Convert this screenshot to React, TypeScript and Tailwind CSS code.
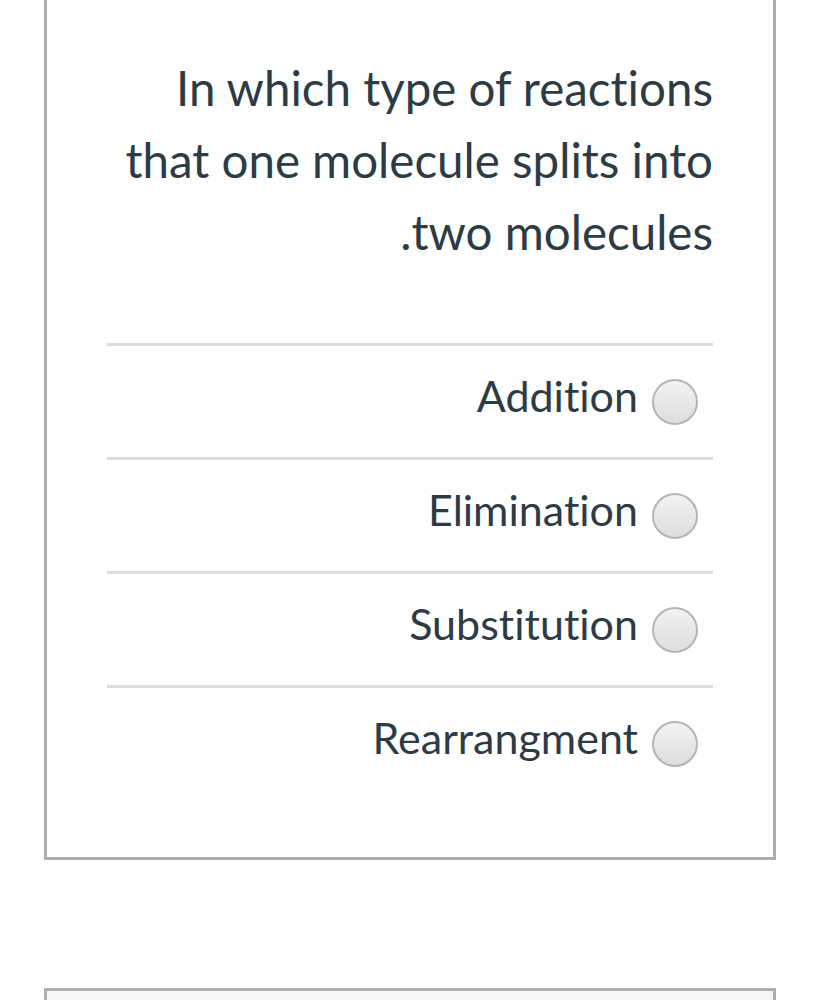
import React from 'react';

const options = ['Addition', 'Elimination', 'Substitution', 'Rearrangment'];

const Radio: React.FC = () => (
  <span className="mr-[15px] inline-block h-[46px] w-[46px] shrink-0 rounded-full border-2 border-[#b5b5b5] bg-gradient-to-b from-[#f2f2f2] to-[#dedede]" />
);

export default function App() {
  return (
    <div
      className="min-h-[1000px] bg-white font-['Lato','Open_Sans',sans-serif] text-[#2d3b45] [font-variant-ligatures:none]"
      dir="rtl"
    >
      <div className="mx-[44px] border-x-[3px] border-b-[3px] border-[#adadad] bg-white px-[60px] pb-[58px] pt-[52px]">
        <p className="text-right text-[47.5px] leading-[72px]">
          In which type of reactions that one molecule splits into two molecules.
        </p>
        <div className="mt-[75px]">
          {options.map((o) => (
            <div key={o} className="flex h-[114px] items-center gap-[14px] border-t-[3px] border-[#dcdcdc]">
              <Radio />
              <span className="mb-[12px] text-[43px] leading-none">{o}</span>
            </div>
          ))}
        </div>
      </div>
      <div className="mx-[44px] mt-[128px] h-[40px] border-[3px] border-b-0 border-[#adadad] bg-[#f5f5f5]" />
    </div>
  );
}
